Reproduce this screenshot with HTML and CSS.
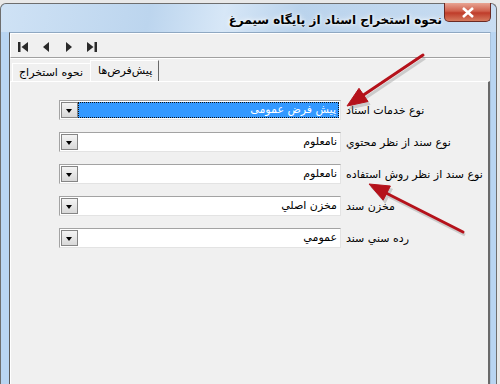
FILE: index.html
```html
<!DOCTYPE html>
<html lang="fa">
<head>
    <meta charset="UTF-8">
    <title>نحوه استخراج اسناد از پایگاه سیمرغ</title>
    <link rel="stylesheet" href="styles.css">
</head>
<body>
    <div class="window">
        <div class="titlebar">
            <span class="title">نحوه استخراج اسناد از پایگاه سیمرغ</span>
            <span class="close">
                <svg width="14" height="11" viewBox="0 0 14 11"><path d="M2 1 L12 10 M12 1 L2 10" stroke="#fff" stroke-width="2.6"/></svg>
            </span>
        </div>
        <div class="client">
            <div class="toolbar">
                <svg class="nav" width="90" height="12" viewBox="0 0 90 12">
                    <rect x="0" y="0" width="2.5" height="10" fill="#2a2a2a"/>
                    <path d="M10 0 L3.5 5 L10 10 Z" fill="#2a2a2a"/>
                    <path d="M31 0 L25 5 L31 10 Z" fill="#2a2a2a"/>
                    <path d="M48 0 L54 5 L48 10 Z" fill="#2a2a2a"/>
                    <path d="M69 0 L75.5 5 L69 10 Z" fill="#2a2a2a"/>
                    <rect x="76.5" y="0" width="2.5" height="10" fill="#2a2a2a"/>
                </svg>
            </div>
            <div class="tabs">
                <span class="tab">نحوه استخراج</span>
                <span class="tab active">پیش‌فرض‌ها</span>
            </div>
            <div class="panel">
                <div class="row">
                    <div class="combo"><span class="drop"></span><span class="field selected"><span class="focus">پیش فرض عمومی</span></span></div>
                    <span class="label">نوع خدمات اسناد</span>
                </div>
                <div class="row">
                    <div class="combo"><span class="drop"></span><span class="field">نامعلوم</span></div>
                    <span class="label">نوع سند از نظر محتوي</span>
                </div>
                <div class="row">
                    <div class="combo"><span class="drop"></span><span class="field">نامعلوم</span></div>
                    <span class="label">نوع سند از نظر روش استفاده</span>
                </div>
                <div class="row">
                    <div class="combo"><span class="drop"></span><span class="field">مخزن اصلي</span></div>
                    <span class="label">مخزن سند</span>
                </div>
                <div class="row">
                    <div class="combo"><span class="drop"></span><span class="field">عمومي</span></div>
                    <span class="label">رده سني سند</span>
                </div>
            </div>
        </div>
        <!-- red pointer arrows drawn over the dialog -->
        <svg class="arrows" width="500" height="384" viewBox="0 0 500 384">
            <g fill="#888" stroke="#888" opacity="0.35" transform="translate(2,3)">
                <path d="M423 55 L362 96" stroke-width="3"/>
                <path d="M347 106 L368 101.5 L359 88.3 Z"/>
                <path d="M463 232 L386 193" stroke-width="3"/>
                <path d="M369 184 L390.4 186 L383.2 200.2 Z"/>
            </g>
            <g fill="#b5121b" stroke="#b5121b">
                <path d="M423 55 L362 96" stroke-width="3" stroke-linecap="round"/>
                <path d="M347 106 L368 101.5 L359 88.3 Z" stroke-width="1"/>
                <path d="M463 232 L386 193" stroke-width="3" stroke-linecap="round"/>
                <path d="M369 184 L390.4 186 L383.2 200.2 Z" stroke-width="1"/>
            </g>
        </svg>
    </div>
</body>
</html>
```

FILE: styles.css
```css
* {
    margin: 0;
    padding: 0;
    box-sizing: border-box;
}
body {
    background: #e9e9e9;
    font-family: "DejaVu Sans", sans-serif;
    font-size: 11px;
}
.window {
    position: relative;
    width: 497px;
    height: 384px;
    margin-top: 3px;
    background: #b9d5f2;
    border: 1px solid #6e6e6e;
    border-bottom: none;
    border-radius: 6px 6px 0 0;
    display: flex;
    flex-direction: column;
}
.titlebar {
    height: 28px;
    display: flex;
    justify-content: flex-end;
    align-items: flex-start;
    padding-right: 5px;
    border-radius: 6px 6px 0 0;
    background: linear-gradient(100deg, #cfe2f5 0%, #bcd5ee 30%, #d7e7f7 45%, #bad3ec 60%, #c9ddf2 100%);
}
.title {
    font-weight: bold;
    font-size: 12px;
    margin-top: 9px;
    margin-right: 2px;
    text-shadow: 0 0 6px #fff, 0 0 3px #fff;
}
.close {
    width: 47px;
    height: 19px;
    margin-top: -1px;
    display: flex;
    justify-content: center;
    align-items: center;
    border: 1px solid #6b2a24;
    border-top: none;
    border-radius: 0 0 5px 5px;
    background: linear-gradient(#e8a493, #d0604c 45%, #bf3c2a 55%, #d57a5e);
}
.client {
    flex: 1;
    margin: 0 5px 0 8px;
    border-left: 1px solid #5a5a5a;
    border-top: 1px solid #8fa8c2;
    border-right: 1px solid #a9c2dc;
    background: #f0f0f0;
    display: flex;
    flex-direction: column;
}
.toolbar {
    height: 25px;
    border-top: 1px solid #fff;
    border-left: 1px solid #fff;
    border-bottom: 1px solid #a0a0a0;
    padding: 8px 0 0 7px;
}
.nav {
    display: block;
}
.tabs {
    height: 23px;
    display: flex;
    align-items: flex-end;
    padding-left: 2px;
    border-top: 1px solid #fff;
}
.tab {
    height: 18px;
    padding: 2px 7px 0 6px;
    border-top: 1px solid #fff;
    border-left: 1px solid #fff;
}
.tab.active {
    height: 21px;
    padding: 3px 6px 0 7px;
    border-right: 1px solid #696969;
}
.panel {
    flex: 1;
    border-top: 1px solid #fff;
    border-left: 1px solid #fff;
    border-right: 2px solid #696969;
    padding: 18px 0 0 48px;
    display: flex;
    flex-direction: column;
    gap: 12px;
}
.row {
    display: flex;
    align-items: center;
    height: 20px;
}
.combo {
    width: 282px;
    height: 20px;
    display: flex;
    align-items: center;
    padding: 1px;
    border: 1px solid #a3a3a3;
    border-right-color: #e3e3e3;
    border-bottom-color: #e3e3e3;
    background: #fff;
}
.drop {
    width: 17px;
    height: 16px;
    border: 1px solid #858585;
    background: linear-gradient(#f4f4f4, #d8d8d8);
    position: relative;
}
.drop::after {
    content: "";
    position: absolute;
    left: 4px;
    top: 6px;
    border-left: 3.5px solid transparent;
    border-right: 3.5px solid transparent;
    border-top: 4px solid #000;
}
.field {
    flex: 1;
    height: 16px;
    direction: rtl;
    padding-right: 2px;
    line-height: 16px;
    margin-left: 1px;
}
.field.selected {
    background: #3399ff;
    color: #fff;
    padding: 0;
    margin-left: 0;
}
.focus {
    display: block;
    height: 16px;
    border: 1px dotted #111;
    padding-right: 2px;
    line-height: 14px;
}
.label {
    margin-left: 5px;
    direction: rtl;
}
.arrows {
    position: absolute;
    left: -1px;
    top: -4px;
    pointer-events: none;
}
```
